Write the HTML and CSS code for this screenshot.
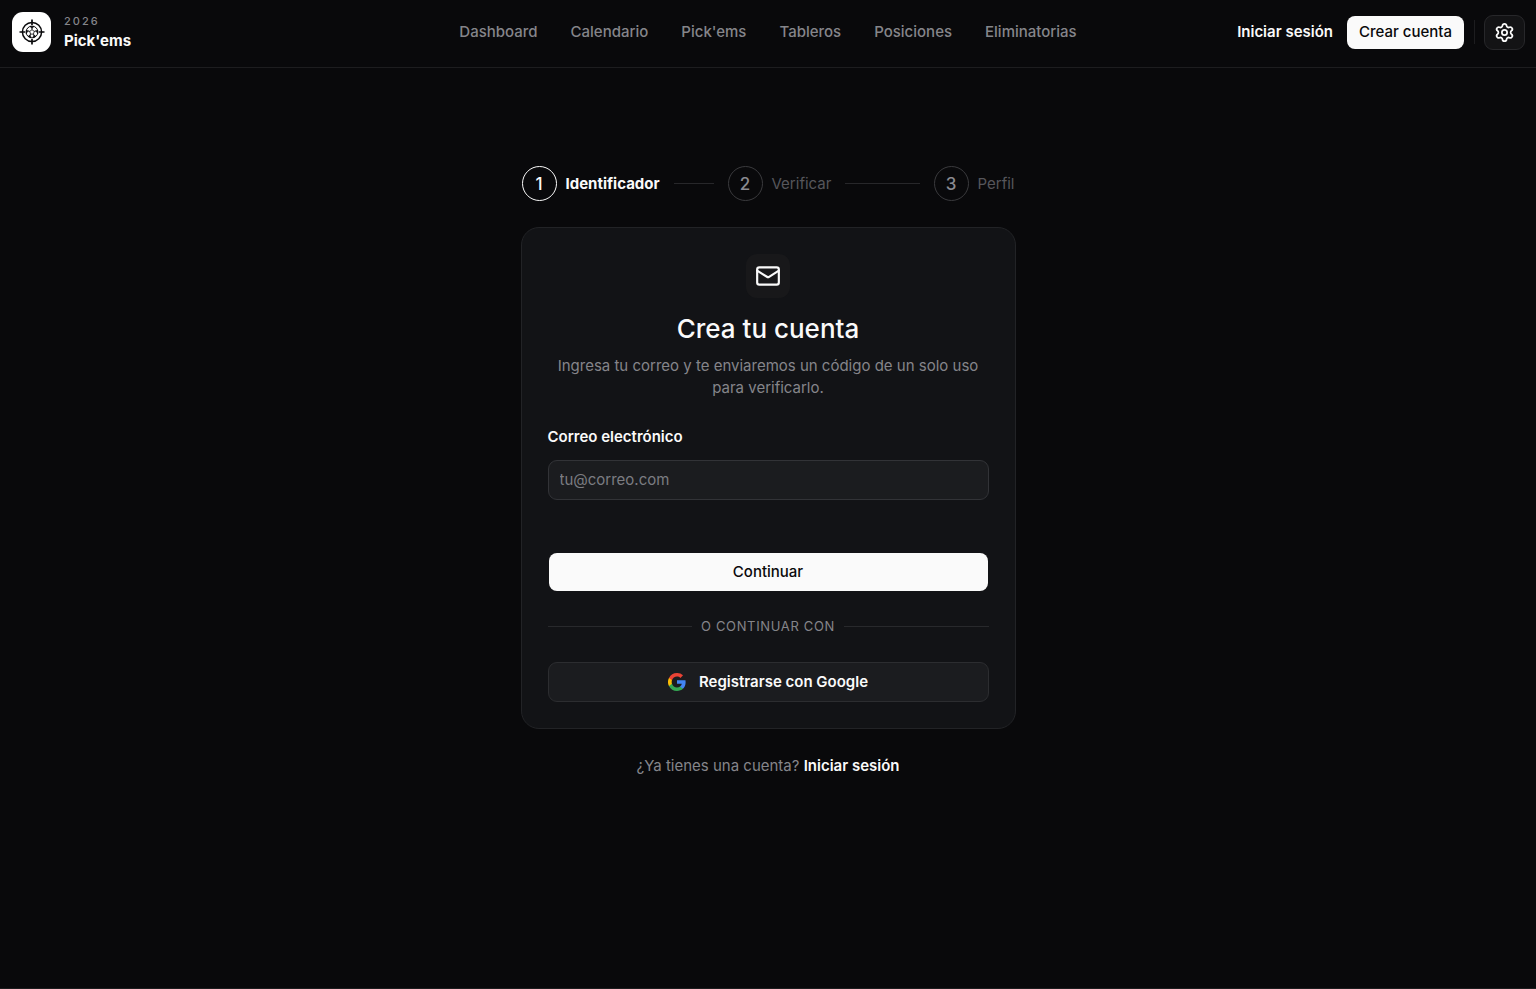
FILE: index.html
```
<!DOCTYPE html>
<html lang="es">
<head>
	<meta charset="UTF-8">
	<meta name="viewport" content="width=device-width, initial-scale=1.0">
	<title>Crea tu cuenta · Pick'ems 2026</title>
	<link rel="stylesheet" href="styles.css">
</head>
<body>

<header class="topbar">
	<a class="brand" href="#">
		<span class="brand-logo">
			<svg viewBox="0 0 26 26" width="26" height="26" fill="none" stroke="#09090b">
				<circle cx="13" cy="13" r="9.6" stroke-width="1.5"/>
				<path d="M13 .5v5.500M13 20v5.500M.5 13H6M20 13h5.500" stroke-width="1.700"/>
				<circle cx="13" cy="13" r="5.900" stroke-width="1"/>
				<path d="M13 10.700l2.300 1.700-.9 2.700h-2.800l-.9-2.700z" stroke-width=".8"/>
				<path d="M13 10.700V8.500M15.300 12.400l2.100-.7M14.400 15.100l1.300 1.800M11.600 15.100l-1.300 1.800M10.700 12.400l-2.100-.7" stroke-width="1"/>
				<path d="M10.900 7.400h4.200L13 9.200zM18.700 11.300l.1 3.200-1.900-2.400zM17 17.200l-2.900 1.500.4-2.300zM9 17.200l2.900 1.500-.4-2.300zM7.300 11.300l-.1 3.200 1.900-2.400z" fill="#09090b" stroke-width=".6"/>
			</svg>
		</span>
		<span class="brand-text">
			<span class="brand-year">2026</span>
			<span class="brand-name">Pick'ems</span>
		</span>
	</a>

	<nav class="nav">
		<a href="#">Dashboard</a>
		<a href="#">Calendario</a>
		<a href="#">Pick'ems</a>
		<a href="#">Tableros</a>
		<a href="#">Posiciones</a>
		<a href="#">Eliminatorias</a>
	</nav>

	<div class="actions">
		<a class="login-link" href="#">Iniciar sesión</a>
		<a class="signup-link" href="#">Crear cuenta</a>
		<span class="actions-divider"></span>
		<button class="settings-button" type="button" aria-label="Ajustes">
			<svg viewBox="0 0 24 24" width="21" height="21" fill="none" stroke="currentColor" stroke-width="2" stroke-linecap="round" stroke-linejoin="round">
				<path d="M9.671 4.136a2.340 2.340 0 0 1 4.659 0 2.340 2.340 0 0 0 3.319 1.915 2.340 2.340 0 0 1 2.330 4.033 2.340 2.340 0 0 0 0 3.831 2.340 2.340 0 0 1-2.330 4.033 2.340 2.340 0 0 0-3.319 1.915 2.340 2.340 0 0 1-4.659 0 2.340 2.340 0 0 0-3.320-1.915 2.340 2.340 0 0 1-2.330-4.033 2.340 2.340 0 0 0 0-3.831A2.340 2.340 0 0 1 6.350 6.051a2.340 2.340 0 0 0 3.319-1.915"/>
				<circle cx="12" cy="12" r="3"/>
			</svg>
		</button>
	</div>
</header>

<main class="signup">
	<ol class="steps">
		<li class="step active"><span class="step-number">1</span><span class="step-label">Identificador</span></li>
		<li class="step"><span class="step-number">2</span><span class="step-label">Verificar</span></li>
		<li class="step"><span class="step-number">3</span><span class="step-label">Perfil</span></li>
	</ol>

	<section class="card">
		<div class="card-icon">
			<svg viewBox="0 0 24 24" width="26" height="26" fill="none" stroke="currentColor" stroke-width="2" stroke-linecap="round" stroke-linejoin="round">
				<rect x="2" y="4" width="20" height="16" rx="2"/>
				<path d="M22 7l-8.990 5.730a1.940 1.940 0 0 1-2.020 0L2 7"/>
			</svg>
		</div>
		<h1>Crea tu cuenta</h1>
		<p class="card-intro">Ingresa tu correo y te enviaremos un código de un solo uso para verificarlo.</p>

		<form class="form">
			<label for="email">Correo electrónico</label>
			<input id="email" type="email" placeholder="tu@correo.com">
			<button class="submit-button" type="submit">Continuar</button>
		</form>

		<div class="separator">O continuar con</div>

		<button class="google-button" type="button">
			<svg viewBox="0 0 24 24" width="18" height="18">
				<path fill="#4285f4" d="M23.500 12.270c0-.85-.08-1.670-.22-2.450H12v4.640h6.450a5.510 5.510 0 0 1-2.390 3.620v3h3.870c2.260-2.090 3.570-5.160 3.570-8.810z"/>
				<path fill="#34a853" d="M12 24c3.240 0 5.950-1.080 7.930-2.910l-3.870-3c-1.070.72-2.450 1.150-4.060 1.150-3.120 0-5.770-2.110-6.710-4.950h-4v3.100A12 12 0 0 0 12 24z"/>
				<path fill="#fbbc05" d="M5.290 14.290a7.200 7.200 0 0 1 0-4.580v-3.100h-4a12 12 0 0 0 0 10.780z"/>
				<path fill="#ea4335" d="M12 4.750c1.760 0 3.350.61 4.590 1.800l3.440-3.440A11.500 11.500 0 0 0 12 0 12 12 0 0 0 1.290 6.610l4 3.100C6.230 6.870 8.880 4.750 12 4.750z"/>
			</svg>
			Registrarse con Google
		</button>
	</section>

	<p class="login-hint">¿Ya tienes una cuenta? <a href="#">Iniciar sesión</a></p>
</main>

</body>
</html>
```

FILE: styles.css
```
* {
	box-sizing: border-box;
}

body {
	margin: 0;
	min-height: 100vh;
	display: flex;
	flex-direction: column;
	background: #09090b;
	color: #fafafa;
	font-family: Inter, sans-serif;
	font-size: 15px;
	line-height: 22px;
	border-bottom: 1px solid #1c1c1e;
}

a {
	color: inherit;
	text-decoration: none;
}

button, input {
	font: inherit;
	color: inherit;
}

button {
	cursor: pointer;
}

svg {
	display: block;
}

/* top bar */

.topbar {
	display: grid;
	grid-template-columns: 1fr auto 1fr;
	align-items: center;
	height: 68px;
	padding: 0 11px 3px;
	border-bottom: 1px solid #1d1d1f;
}

.brand {
	display: flex;
	align-items: center;
	gap: 13px;
	padding-left: 1px;
}

.brand-logo {
	display: grid;
	place-items: center;
	width: 39px;
	height: 40px;
	border-radius: 11px;
	background: white;
}

.brand-text {
	display: flex;
	flex-direction: column;
}

.brand-year {
	color: #85858a;
	font-size: 11px;
	font-weight: 500;
	line-height: 17px;
	letter-spacing: 2px;
}

.brand-name {
	font-weight: 700;
}

.nav {
	display: flex;
	gap: 33px;
	color: #85858a;
	font-weight: 500;
}

.actions {
	display: flex;
	align-items: center;
	justify-content: flex-end;
}

.login-link {
	padding: 0 14px;
	font-weight: 600;
}

.signup-link {
	padding: 5px 12px 6px;
	border-radius: 8px;
	background: #fafafa;
	color: #09090b;
	font-weight: 500;
}

.actions-divider {
	width: 1px;
	height: 24px;
	margin: 0 9px 0 10px;
	background: #1d1d1f;
}

.settings-button {
	display: grid;
	place-items: center;
	width: 41px;
	height: 35px;
	padding: 0;
	border: 1px solid #27272a;
	border-radius: 9px;
	background: #131315;
}

/* sign up */

.signup {
	width: 100%;
	max-width: 495px;
	margin: 0 auto;
	padding: 98px 0;
}

.steps {
	display: flex;
	margin: 0 0 26px;
	padding: 0 1px;
	list-style: none;
}

.step {
	display: flex;
	align-items: center;
	color: #56565b;
}

.step:not(:last-child) {
	flex: 1;
}

.step:not(:last-child)::after {
	content: "";
	flex: 1;
	height: 1px;
	margin: 0 14px;
	background: #27272a;
}

.step-number {
	display: grid;
	place-items: center;
	width: 35px;
	height: 35px;
	margin-right: 9px;
	border: 1px solid #3a3a3d;
	border-radius: 50%;
	color: #8a8a90;
	font-size: 17px;
	font-weight: 500;
}

.step.active {
	color: #fafafa;
	font-weight: 700;
}

.step.active .step-number {
	border-color: #fafafa;
	color: #fafafa;
}

.card {
	padding: 26px;
	border: 1px solid #222326;
	border-radius: 18px;
	background: #121316;
}

.card-icon {
	display: grid;
	place-items: center;
	width: 44px;
	height: 44px;
	margin: 0 auto 13px;
	border-radius: 11px;
	background: #18181a;
}

h1 {
	margin: 0 0 9px;
	font-size: 26px;
	font-weight: 500;
	line-height: 35px;
	text-align: center;
}

.card-intro {
	margin: 0 0 27px;
	color: #85858a;
	text-align: center;
}

.form {
	display: flex;
	flex-direction: column;
}

.form label {
	margin-bottom: 12px;
	font-weight: 600;
}

.form input {
	height: 40px;
	padding: 0 11px 2px;
	border: 1px solid #323337;
	border-radius: 9px;
	background: #1b1c1f;
}

.form input::placeholder {
	color: #7c7c82;
	opacity: 1;
}

.submit-button {
	height: 38px;
	margin: 53px 1px 0;
	padding: 0;
	border: none;
	border-radius: 8px;
	background: #fafafa;
	color: #09090b;
	font-weight: 500;
}

.separator {
	display: flex;
	align-items: center;
	gap: 9px;
	margin: 25px 0;
	color: #85858a;
	font-size: 13px;
	line-height: 21px;
	letter-spacing: 0.05em;
	text-transform: uppercase;
}

.separator::before,
.separator::after {
	content: "";
	flex: 1;
	height: 1px;
	background: #28292c;
}

.google-button {
	display: flex;
	align-items: center;
	justify-content: center;
	gap: 13px;
	width: 100%;
	height: 40px;
	border: 1px solid #2c2d30;
	border-radius: 9px;
	background: #1b1c1f;
	font-weight: 600;
}

.login-hint {
	margin: 26px 0 0;
	color: #85858a;
	text-align: center;
}

.login-hint a {
	color: #fafafa;
	font-weight: 600;
}
```
